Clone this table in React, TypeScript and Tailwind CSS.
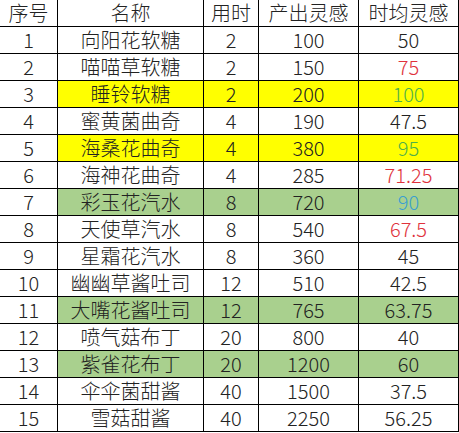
const rows: { no: number; name: string; hours: number; output: number; avg: string; bg?: string; color?: string }[] = [
  { no: 1, name: "向阳花软糖", hours: 2, output: 100, avg: "50" },
  { no: 2, name: "喵喵草软糖", hours: 2, output: 150, avg: "75", color: "text-[#e0323c]" },
  { no: 3, name: "睡铃软糖", hours: 2, output: 200, avg: "100", bg: "bg-[#ffff00]", color: "text-[#4fb04a]" },
  { no: 4, name: "蜜黄菌曲奇", hours: 4, output: 190, avg: "47.5" },
  { no: 5, name: "海桑花曲奇", hours: 4, output: 380, avg: "95", bg: "bg-[#ffff00]", color: "text-[#4fb04a]" },
  { no: 6, name: "海神花曲奇", hours: 4, output: 285, avg: "71.25", color: "text-[#e0323c]" },
  { no: 7, name: "彩玉花汽水", hours: 8, output: 720, avg: "90", bg: "bg-[#a9d08e]", color: "text-[#3a9fd0]" },
  { no: 8, name: "天使草汽水", hours: 8, output: 540, avg: "67.5", color: "text-[#e0323c]" },
  { no: 9, name: "星霜花汽水", hours: 8, output: 360, avg: "45" },
  { no: 10, name: "幽幽草酱吐司", hours: 12, output: 510, avg: "42.5" },
  { no: 11, name: "大嘴花酱吐司", hours: 12, output: 765, avg: "63.75", bg: "bg-[#a9d08e]" },
  { no: 12, name: "喷气菇布丁", hours: 20, output: 800, avg: "40" },
  { no: 13, name: "紫雀花布丁", hours: 20, output: 1200, avg: "60", bg: "bg-[#a9d08e]" },
  { no: 14, name: "伞伞菌甜酱", hours: 40, output: 1500, avg: "37.5" },
  { no: 15, name: "雪菇甜酱", hours: 40, output: 2250, avg: "56.25" },
]

const cell = "h-[27px] flex items-center justify-center border-r border-b border-black leading-[26px]"

export default function App() {
  return (
    <div
      className="w-[459px] h-[433px] bg-white text-[#222] text-[20px] font-light"
      style={{ fontFamily: '"Noto Sans CJK SC", "Noto Sans", sans-serif' }}
    >
      <div className="grid grid-cols-[58px_146px_55px_100px_100px]">
        <div className={cell}>序号</div>
        <div className={cell}>名称</div>
        <div className={cell}>用时</div>
        <div className={cell}>产出灵感</div>
        <div className={cell}>时均灵感</div>
        {rows.map((r) => (
          <div key={r.no} className="contents">
            <div className={cell}>{r.no}</div>
            <div className={`${cell} ${r.bg ?? ""}`}>{r.name}</div>
            <div className={`${cell} ${r.bg ?? ""}`}>{r.hours}</div>
            <div className={`${cell} ${r.bg ?? ""}`}>{r.output}</div>
            <div className={`${cell} ${r.bg ?? ""} ${r.color ?? ""}`}>{r.avg}</div>
          </div>
        ))}
      </div>
    </div>
  )
}
